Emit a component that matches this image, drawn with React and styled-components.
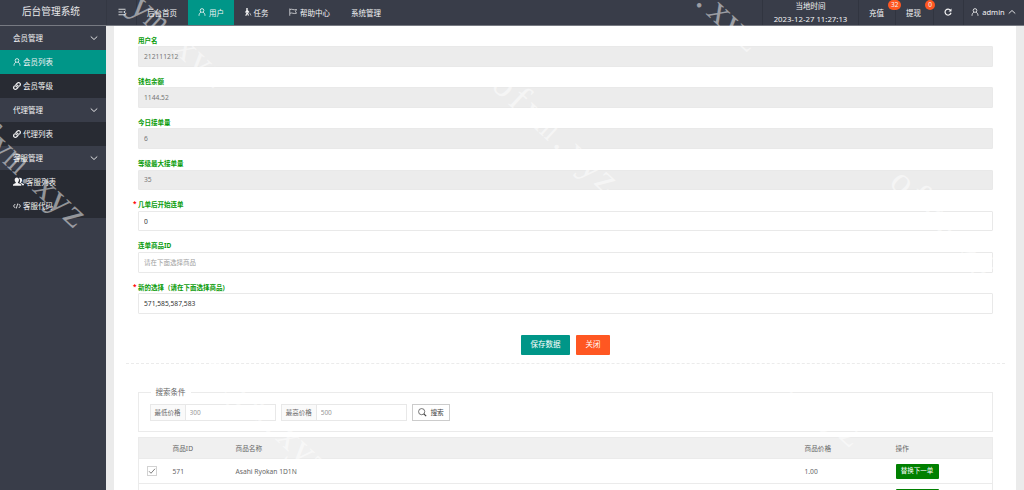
import React, { useState } from 'react';
import styled, { createGlobalStyle } from 'styled-components';
import { FaLink } from 'react-icons/fa';

const GlobalStyle = createGlobalStyle`
  * {
    box-sizing: border-box;
  }

  body {
    margin: 0;
    overflow: hidden;
    background: #ebebeb;
    font-family: "Noto Sans", "Noto Sans CJK SC", sans-serif;
    font-size: 6.7px;
    color: #666;
  }

  input, button {
    font-family: inherit;
  }
`;

const Page = styled.div`
  position: relative;
  height: 490px;
  overflow: hidden;
  display: flex;
  flex-direction: column;
`;

const TopBar = styled.header`
  display: flex;
  flex: none;
  height: 26px;
  background: #393d49;
  border-bottom: 1px solid #777a82;
  color: #f4f4f5;
  font-size: 7.5px;
`;

const Logo = styled.div`
  width: 107px;
  padding-right: 4px;
  border-right: 1px solid #343843;
  font-size: 9.7px;
  line-height: 24px;
  text-align: center;
  color: #e8e8ea;
`;

const NavItem = styled.div`
  display: flex;
  align-items: center;
  justify-content: center;
  gap: ${(p) => p.$gap || 3}px;
  width: ${(p) => p.$width}px;
  height: 25px;
  padding: 0 1px 1px 0;
  background: ${(p) => (p.$active ? '#009688' : 'transparent')};
  border-left: 1px solid ${(p) => (p.$divided ? '#313540' : 'transparent')};
  white-space: nowrap;
`;

const Spacer = styled.div`
  flex: 1;
`;

const Clock = styled(NavItem)`
  flex-direction: column;
  gap: 0;
  padding: 0;
  line-height: 12.2px;

  span:last-child {
    font-size: 7.8px;
  }
`;

const Counter = styled(NavItem)`
  position: relative;
  z-index: ${(p) => p.$layer};
  justify-content: flex-start;
  padding-left: 10px;
`;

const Badge = styled.span`
  position: absolute;
  top: 0;
  left: ${(p) => p.$left}px;
  min-width: 10px;
  height: 10px;
  padding: 0 3px;
  border-radius: 5px;
  background: #ff5722;
  font-size: 6.5px;
  line-height: 10px;
  text-align: center;
`;

const Body = styled.div`
  display: flex;
  flex: 1;
  min-height: 0;
`;

const Sidebar = styled.aside`
  flex: none;
  width: 106px;
  background: #393d49;
  color: #f4f4f5;
  font-size: 7.5px;
`;

const MenuGroup = styled.div`
  display: flex;
  align-items: center;
  justify-content: space-between;
  height: 24px;
  padding: 0 8px 1px 13px;
`;

const MenuItem = styled.div`
  display: flex;
  align-items: center;
  gap: 2px;
  height: 24px;
  padding: 0 0 1px 13px;
  background: ${(p) => (p.$active ? '#009688' : '#282b33')};
`;

const Content = styled.main`
  flex: 1;
  margin: 0 8px;
  padding: 9.5px 23px 0 24px;
  background: #fff;
  min-width: 0;
`;

const Field = styled.div`
  height: 41.2px;
`;

const Label = styled.label`
  position: relative;
  display: block;
  height: 10.5px;
  line-height: 9.6px;
  font-size: 6.5px;
  font-weight: 700;
  color: #0a9c0a;
`;

const Required = styled.span`
  position: absolute;
  left: -5px;
  top: -1px;
  color: #f00;
`;

const Input = styled.input`
  display: block;
  width: 100%;
  height: 20.6px;
  padding: 0 5px;
  border: 1px solid #e9e9e9;
  border-radius: 1px;
  outline: none;
  background: ${(p) => (p.readOnly ? '#ececec' : '#fff')};
  color: ${(p) => (p.readOnly ? '#777' : '#333')};
  font-size: 6.7px;

  &::placeholder {
    color: #a0a0a0;
    font-size: 6.5px;
  }
`;

const Actions = styled.div`
  display: flex;
  justify-content: center;
  gap: 6px;
  height: 40px;
  margin: 0 -12px;
  padding-top: 11px;
  border-bottom: 1px dashed #ebebeb;
`;

const Button = styled.button`
  width: ${(p) => p.$width}px;
  height: ${(p) => p.$height || 20}px;
  padding: 0;
  border: none;
  border-radius: 1px;
  background: ${(p) => p.$color};
  color: #fff;
  font-size: ${(p) => p.$size || 7.5}px;
  line-height: 1;
  white-space: nowrap;
`;

const SearchBox = styled.fieldset`
  display: flex;
  height: 45px;
  margin: 23.5px 0 4.3px;
  padding: 7px 10.5px 0;
  border: 1px solid #ebebeb;

  legend {
    margin-left: 1px;
    padding: 0 5px;
    font-size: 7.5px;
    line-height: 10px;
  }
`;

const SearchRow = styled.div`
  display: flex;
  gap: 5px;
`;

const InputGroup = styled.div`
  display: flex;
  width: 126.2px;
  height: 17px;
  border: 1px solid #e8e8e8;

  span {
    width: 35px;
    border-right: 1px solid #e8e8e8;
    background: #fafafa;
    font-size: 6.5px;
    line-height: 15px;
    text-align: center;
  }

  input {
    flex: 1;
    min-width: 0;
    padding: 0 4px;
    border: none;
    outline: none;
    font-size: 6.5px;
  }

  input::placeholder {
    color: #999;
  }
`;

const SearchButton = styled.button`
  display: flex;
  align-items: center;
  justify-content: center;
  gap: 3px;
  width: 38.5px;
  height: 17px;
  padding: 0 0 1px;
  border: 1px solid #ccc;
  background: #fff;
  color: #444;
  font-size: 6.7px;
`;

const Table = styled.div`
  border: 1px solid #ebebeb;
`;

const Row = styled.div`
  display: grid;
  grid-template-columns: 33.5px 63px 569px 91px 1fr;
  align-items: center;
  height: ${(p) => (p.$head ? 21.5 : 25)}px;
  background: ${(p) => (p.$head ? '#f0f0f0' : '#fff')};
  border-bottom: 1px solid #ebebeb;
`;

const Check = styled.span`
  display: flex;
  align-items: center;
  justify-content: center;
  width: 10px;
  height: 10px;
  margin-left: 8px;
  border: 1px solid #d2d2d2;
`;

const Watermark = styled.div`
  position: absolute;
  z-index: 5;
  left: ${(p) => p.$x - 10}px;
  top: ${(p) => p.$y - 24}px;
  display: flex;
  transform: rotate(43deg);
  transform-origin: 10px 24px;
  color: rgba(255, 255, 255, 0.5);
  font-family: "Liberation Serif", serif;
  font-size: 38px;
  line-height: 40px;
  pointer-events: none;
`;

const Glyph = styled.span`
  display: flex;
  justify-content: center;
  width: 20px;
  transform: scaleX(${(p) => (p.$wide ? 0.68 : 1)});
`;

const Icon = ({ size = 8, children, ...rest }) => (
  <svg
    width={size}
    height={size}
    viewBox="0 0 16 16"
    fill="none"
    stroke="currentColor"
    strokeWidth="1.7"
    {...rest}
  >
    {children}
  </svg>
);

const UserIcon = () => (
  <Icon>
    <circle cx="8" cy="5" r="3.7" />
    <path d="M2 15.5c0-4 2.2-6.6 4-7M14 15.5c0-4-2.2-6.6-4-7" />
  </Icon>
);

const UsersIcon = () => (
  <Icon size={11} fill="currentColor" stroke="none">
    <path d="M10 2.500c2 0 3.200 1.300 3.200 3.300 0 1.500-.6 2.700-1.500 3.300v.8l3.300 1.400c.7.300 1 .8 1 1.500V13.500h-3c0-1.500-.6-2.200-2-2.800l-1.500-.7c1.200-2 1.200-5-.8-7 .4-.3.800-.5 1.300-.5z" />
    <path d="M5.500 2c2 0 3.200 1.400 3.200 3.500 0 1.600-.6 2.900-1.500 3.500v1l3.600 1.500c.8.300 1.200.9 1.200 1.700v.8H0v-.8c0-.8.300-1.400 1-1.700L4 10V9c-1-.6-1.600-1.900-1.600-3.500C2.400 3.400 3.600 2 5.500 2z" />
  </Icon>
);

const MenuIcon = () => (
  <Icon>
    <path d="M1 2.5h14M1 8h8M1 13.5h14M15 5.5L11.500 8l3.500 2.500" />
  </Icon>
);

const WalkIcon = () => (
  <Icon>
    <circle cx="6" cy="2" r="1.900" fill="currentColor" stroke="none" />
    <path d="M6 4v6L3.500 15.500M6.500 9.500l2.500 5.500M6.500 5l3.500 4M5.500 5L3 9" strokeWidth="2.300" />
    <path d="M11.500 10l2.500 5" strokeWidth="1.200" />
  </Icon>
);

const FlagIcon = () => (
  <Icon>
    <path d="M1.500 1v14.500M2 3c4-2 7 2 13 0l-2 4 2 3.500c-6 2-9-2-13 0" strokeWidth="1.400" />
  </Icon>
);

const RefreshIcon = () => (
  <Icon strokeWidth="2.400">
    <path d="M13 4.500A6 6 0 1 0 14 9.500" />
    <path d="M15 1v6H9z" fill="currentColor" stroke="none" />
  </Icon>
);

const Chevron = ({ up }) => (
  <Icon strokeWidth="1.800">
    <path d={up ? 'M1.500 11L8 5l6.500 6' : 'M1.500 5L8 11l6.500-6'} />
  </Icon>
);

const CodeIcon = () => (
  <Icon>
    <path d="M4.500 4L1 8l3.500 4M11.500 4L15 8l-3.500 4M9.500 3l-3 10" />
  </Icon>
);

const SearchIcon = () => (
  <Icon size={9} strokeWidth="1.300">
    <circle cx="6.500" cy="6.500" r="5.500" />
    <path d="M10.500 10.500l4 4" strokeWidth="2.200" />
  </Icon>
);

const fields = [
  { label: '用户名', name: 'username', readOnly: true },
  { label: '钱包余额', name: 'balance', readOnly: true },
  { label: '今日接单量', name: 'today', readOnly: true },
  { label: '等级最大接单量', name: 'limit', readOnly: true },
  { label: '几单后开始连单', name: 'start', required: true },
  { label: '连单商品ID', name: 'goods', placeholder: '请在下面选择商品' },
  { label: '新的选择（请在下面选择商品)', name: 'selected', required: true },
];

// x and y are the centre of the first glyph
const marks = [
  { x: -14, y: 135, text: 'fym.xyz' },
  { x: 141, y: 9, text: 'ym.xyz' },
  { x: 704, y: 0, text: '.xyz' },
  { x: 503, y: 87, text: 'ofym.xyz' },
  { x: 901, y: 184, text: 'ofym.xyz' },
  { x: 200, y: 357, text: 'gofym.xyz' },
  { x: 733, y: 327, text: 'gofym.xyz' },
];

const App = () => {
  const [form, setForm] = useState({
    username: '212111212',
    balance: '1144.52',
    today: '6',
    limit: '35',
    start: '0',
    goods: '',
    selected: '571,585,587,583',
  });

  return (
    <Page>
      <GlobalStyle />
      <TopBar>
        <Logo>后台管理系统</Logo>
        <NavItem $width={29}><MenuIcon /></NavItem>
        <NavItem $width={52} $divided>后台首页</NavItem>
        <NavItem $width={46} $active><UserIcon />用户</NavItem>
        <NavItem $width={44} $gap={2}><WalkIcon />任务</NavItem>
        <NavItem $width={63}><FlagIcon />帮助中心</NavItem>
        <NavItem $width={50}>系统管理</NavItem>
        <Spacer />
        <Clock $width={96} $divided>
          <span>当地时间</span>
          <span>2023-12-27 11:27:13</span>
        </Clock>
        <Counter $width={37} $layer={2} $divided>
          充值
          <Badge $left={29}>32</Badge>
        </Counter>
        <Counter $width={38} $layer={1} $divided>
          提现
          <Badge $left={29}>0</Badge>
        </Counter>
        <NavItem $width={30} $divided><RefreshIcon /></NavItem>
        <NavItem $width={61} $divided><UserIcon />admin<Chevron up /></NavItem>
      </TopBar>

      <Body>
        <Sidebar>
          <MenuGroup>会员管理<Chevron /></MenuGroup>
          <MenuItem $active><UserIcon />会员列表</MenuItem>
          <MenuItem><FaLink size={8} />会员等级</MenuItem>
          <MenuGroup>代理管理<Chevron /></MenuGroup>
          <MenuItem><FaLink size={8} />代理列表</MenuItem>
          <MenuGroup>客服管理<Chevron /></MenuGroup>
          <MenuItem><UsersIcon />客服列表</MenuItem>
          <MenuItem><CodeIcon />客服代码</MenuItem>
        </Sidebar>

        <Content>
          {fields.map((field) => (
            <Field key={field.name}>
              <Label>
                {field.required && <Required>*</Required>}
                {field.label}
              </Label>
              <Input
                value={form[field.name]}
                readOnly={field.readOnly}
                placeholder={field.placeholder}
                onChange={(e) => setForm({ ...form, [field.name]: e.target.value })}
              />
            </Field>
          ))}

          <Actions>
            <Button $width={49} $color="#009688">保存数据</Button>
            <Button $width={34} $color="#ff5722">关闭</Button>
          </Actions>

          <SearchBox>
            <legend>搜索条件</legend>
            <SearchRow>
              <InputGroup><span>最低价格</span><input placeholder="300" /></InputGroup>
              <InputGroup><span>最高价格</span><input placeholder="500" /></InputGroup>
              <SearchButton><SearchIcon />搜索</SearchButton>
            </SearchRow>
          </SearchBox>

          <Table>
            <Row $head>
              <span />
              <span>商品ID</span>
              <span>商品名称</span>
              <span>商品价格</span>
              <span>操作</span>
            </Row>
            <Row>
              <Check>
                <Icon><path d="M2 8.500l4 4 8-9" /></Icon>
              </Check>
              <span>571</span>
              <span>Asahi Ryokan 1D1N</span>
              <span>1.00</span>
              <Button $width={43} $height={15} $size={6.5} $color="#008000">替换下一单</Button>
            </Row>
            <Row>
              <Check />
              <span />
              <span />
              <span />
              <Button $width={43} $height={15} $color="#008000" />
            </Row>
          </Table>
        </Content>
      </Body>

      {marks.map(({ x, y, text }) => (
        <Watermark key={`${x},${y}`} $x={x} $y={y} aria-hidden="true">
          {[...text].map((char, i) => (
            <Glyph key={i} $wide={char === 'm'}>{char}</Glyph>
          ))}
        </Watermark>
      ))}
    </Page>
  );
};

export default App;
